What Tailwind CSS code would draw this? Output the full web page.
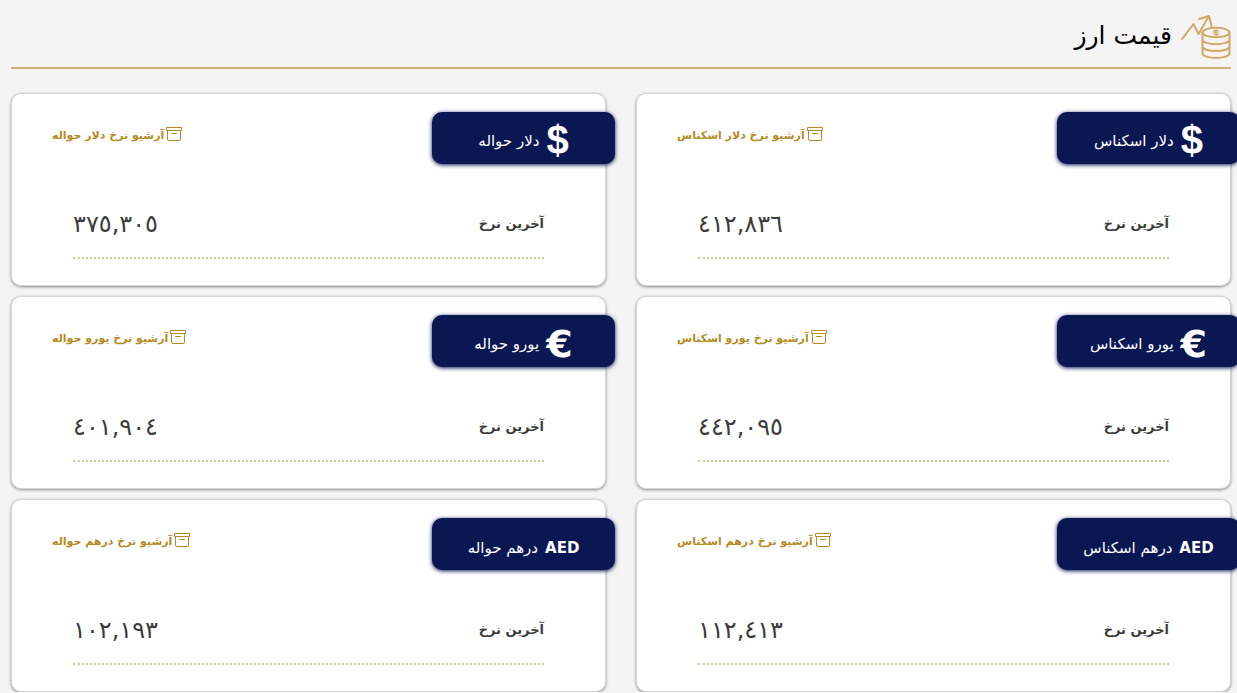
<!DOCTYPE html>
<html lang="fa" dir="rtl">
<head>
  <meta charset="UTF-8" />
  <meta name="viewport" content="width=device-width, initial-scale=1.0"/>
  <title>قیمت ارز</title>
  <script src="https://cdn.jsdelivr.net/npm/@tailwindcss/browser@4"></script>
</head>
<body class="bg-[#f4f4f4] text-[#3c3c3c] font-['DejaVu_Sans',sans-serif] overflow-x-clip">

  <!-- Archive icon, shared by all cards -->
  <svg class="hidden" xmlns="http://www.w3.org/2000/svg">
    <symbol id="archive" viewBox="0 0 16 16">
      <path fill="currentColor" d="M0 2a1 1 0 0 1 1-1h14a1 1 0 0 1 1 1v2a1 1 0 0 1-1 1v7.500a2.500 2.500 0 0 1-2.500 2.500h-9A2.500 2.500 0 0 1 1 12.500V5a1 1 0 0 1-1-1V2zm2 3v7.500A1.500 1.500 0 0 0 3.500 14h9a1.500 1.500 0 0 0 1.500-1.500V5H2zm13-3H1v2h14V2zM5 7.500a.5.5 0 0 1 .5-.5h5a.5.5 0 0 1 0 1h-5a.5.5 0 0 1-.5-.5z"/>
    </symbol>
  </svg>

  <main class="pt-3 pl-[11px] pr-[6px]">
    <!-- Section title -->
    <header class="flex items-start gap-2 h-[57px] mb-6 border-b-2 border-[#cfb274]">
      <svg class="w-[51px] h-12 shrink-0" viewBox="0 0 51 48" fill="none" stroke="#d3a865" stroke-width="2" stroke-linecap="round" stroke-linejoin="round">
        <path d="M2 27 13.500 12l5 10L29 4M19 7l10-3 2.500 10"/>
        <ellipse cx="36" cy="20.500" rx="13.500" ry="4.800"/>
        <path d="M22.500 20.500v20.700c0 2.700 6 4.800 13.500 4.800s13.500-2.100 13.500-4.800V20.500M22.500 27.500c0 2.700 6 4.800 13.500 4.800s13.500-2.100 13.500-4.800M22.500 34.300c0 2.700 6 4.800 13.500 4.800s13.500-2.100 13.500-4.800"/>
        <path stroke-width="1.200" d="M38.300 19.200c-1-1.100-4.800-1.100-4.800.2 0 1.500 4.900.8 4.900 2.300 0 1.300-4 1.300-5 .2M36 17.600v6"/>
      </svg>
      <h1 class="text-[25px] leading-[48px] text-black">قیمت ارز</h1>
    </header>

    <section class="grid grid-cols-2 gap-x-[30px] gap-y-[10px]">
      <!-- USD -->
      <article class="h-[193px] rounded-[10px] border border-[#d6d6d6] bg-white shadow-[0_1px_3px_#00000070]">
        <div class="flex justify-between items-start pt-[18px] pl-10">
          <h2 class="-mr-[10px] w-[183px] h-[52px] flex items-center justify-center gap-[7px] rounded-[10px] bg-[#0a1753] text-white text-[15px] shadow-[0_1px_4px_#0a1753]">
            <span class="pt-1 font-['Liberation_Sans',sans-serif] font-bold text-[40px] leading-none">$</span>
            <span class="pt-1.5">دلار اسکناس</span>
          </h2>
          <a href="#" class="flex items-center gap-0.5 pt-3 text-[11px] leading-6 font-bold text-[#b58a22]">
            <svg class="w-4 h-4 mb-1"><use href="#archive"/></svg>
            <span>آرشیو نرخ دلار اسکناس</span>
          </a>
        </div>
        <div class="mx-[61px] mt-7 pb-0.5 h-[67px] flex items-center justify-between border-b-2 border-dotted border-[#cdcb96]">
          <span class="text-[13px] font-bold">آخرین نرخ</span>
          <span class="text-2xl">٤١٢,٨٣٦</span>
        </div>
      </article>

      <article class="h-[193px] rounded-[10px] border border-[#d6d6d6] bg-white shadow-[0_1px_3px_#00000070]">
        <div class="flex justify-between items-start pt-[18px] pl-10">
          <h2 class="-mr-[10px] w-[183px] h-[52px] flex items-center justify-center gap-[7px] rounded-[10px] bg-[#0a1753] text-white text-[15px] shadow-[0_1px_4px_#0a1753]">
            <span class="pt-1 font-['Liberation_Sans',sans-serif] font-bold text-[40px] leading-none">$</span>
            <span class="pt-1.5">دلار حواله</span>
          </h2>
          <a href="#" class="flex items-center gap-0.5 pt-3 text-[11px] leading-6 font-bold text-[#b58a22]">
            <svg class="w-4 h-4 mb-1"><use href="#archive"/></svg>
            <span>آرشیو نرخ دلار حواله</span>
          </a>
        </div>
        <div class="mx-[61px] mt-7 pb-0.5 h-[67px] flex items-center justify-between border-b-2 border-dotted border-[#cdcb96]">
          <span class="text-[13px] font-bold">آخرین نرخ</span>
          <span class="text-2xl">٣٧٥,٣٠٥</span>
        </div>
      </article>

      <!-- EUR -->
      <article class="h-[193px] rounded-[10px] border border-[#d6d6d6] bg-white shadow-[0_1px_3px_#00000070]">
        <div class="flex justify-between items-start pt-[18px] pl-10">
          <h2 class="-mr-[10px] w-[183px] h-[52px] flex items-center justify-center gap-[7px] rounded-[10px] bg-[#0a1753] text-white text-[15px] shadow-[0_1px_4px_#0a1753]">
            <span class="pt-1.5 font-bold text-[38px] leading-none">€</span>
            <span class="pt-1.5">یورو اسکناس</span>
          </h2>
          <a href="#" class="flex items-center gap-0.5 pt-3 text-[11px] leading-6 font-bold text-[#b58a22]">
            <svg class="w-4 h-4 mb-1"><use href="#archive"/></svg>
            <span>آرشیو نرخ یورو اسکناس</span>
          </a>
        </div>
        <div class="mx-[61px] mt-7 pb-0.5 h-[67px] flex items-center justify-between border-b-2 border-dotted border-[#cdcb96]">
          <span class="text-[13px] font-bold">آخرین نرخ</span>
          <span class="text-2xl">٤٤٢,٠٩٥</span>
        </div>
      </article>

      <article class="h-[193px] rounded-[10px] border border-[#d6d6d6] bg-white shadow-[0_1px_3px_#00000070]">
        <div class="flex justify-between items-start pt-[18px] pl-10">
          <h2 class="-mr-[10px] w-[183px] h-[52px] flex items-center justify-center gap-[7px] rounded-[10px] bg-[#0a1753] text-white text-[15px] shadow-[0_1px_4px_#0a1753]">
            <span class="pt-1.5 font-bold text-[38px] leading-none">€</span>
            <span class="pt-1.5">یورو حواله</span>
          </h2>
          <a href="#" class="flex items-center gap-0.5 pt-3 text-[11px] leading-6 font-bold text-[#b58a22]">
            <svg class="w-4 h-4 mb-1"><use href="#archive"/></svg>
            <span>آرشیو نرخ یورو حواله</span>
          </a>
        </div>
        <div class="mx-[61px] mt-7 pb-0.5 h-[67px] flex items-center justify-between border-b-2 border-dotted border-[#cdcb96]">
          <span class="text-[13px] font-bold">آخرین نرخ</span>
          <span class="text-2xl">٤٠١,٩٠٤</span>
        </div>
      </article>

      <!-- AED -->
      <article class="h-[193px] rounded-[10px] border border-[#d6d6d6] bg-white shadow-[0_1px_3px_#00000070]">
        <div class="flex justify-between items-start pt-[18px] pl-10">
          <h2 class="-mr-[10px] w-[183px] h-[52px] flex items-center justify-center gap-[7px] rounded-[10px] bg-[#0a1753] text-white text-[15px] shadow-[0_1px_4px_#0a1753]">
            <span class="pt-2 font-bold">AED</span>
            <span class="pt-2">درهم اسکناس</span>
          </h2>
          <a href="#" class="flex items-center gap-0.5 pt-3 text-[11px] leading-6 font-bold text-[#b58a22]">
            <svg class="w-4 h-4 mb-1"><use href="#archive"/></svg>
            <span>آرشیو نرخ درهم اسکناس</span>
          </a>
        </div>
        <div class="mx-[61px] mt-7 pb-0.5 h-[67px] flex items-center justify-between border-b-2 border-dotted border-[#cdcb96]">
          <span class="text-[13px] font-bold">آخرین نرخ</span>
          <span class="text-2xl">١١٢,٤١٣</span>
        </div>
      </article>

      <article class="h-[193px] rounded-[10px] border border-[#d6d6d6] bg-white shadow-[0_1px_3px_#00000070]">
        <div class="flex justify-between items-start pt-[18px] pl-10">
          <h2 class="-mr-[10px] w-[183px] h-[52px] flex items-center justify-center gap-[7px] rounded-[10px] bg-[#0a1753] text-white text-[15px] shadow-[0_1px_4px_#0a1753]">
            <span class="pt-2 font-bold">AED</span>
            <span class="pt-2">درهم حواله</span>
          </h2>
          <a href="#" class="flex items-center gap-0.5 pt-3 text-[11px] leading-6 font-bold text-[#b58a22]">
            <svg class="w-4 h-4 mb-1"><use href="#archive"/></svg>
            <span>آرشیو نرخ درهم حواله</span>
          </a>
        </div>
        <div class="mx-[61px] mt-7 pb-0.5 h-[67px] flex items-center justify-between border-b-2 border-dotted border-[#cdcb96]">
          <span class="text-[13px] font-bold">آخرین نرخ</span>
          <span class="text-2xl">١٠٢,١٩٣</span>
        </div>
      </article>
    </section>
  </main>
</body>
</html>
